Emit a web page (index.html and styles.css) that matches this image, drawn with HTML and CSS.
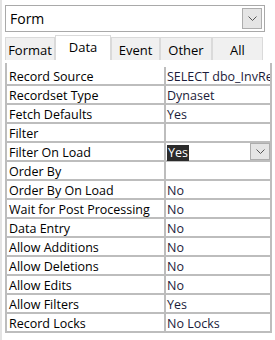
FILE: index.html
```html
<!DOCTYPE html>
<html>
<head>
    <title>Property Sheet</title>
    <link rel="stylesheet" href="styles.css">
</head>
<body>
    <div class="sheet">
        <div class="combo">
            <span class="combo-text">Form</span>
            <span class="drop-btn">
                <svg width="9" height="5" viewBox="0 0 9 5"><path d="M0.5 0.5 L4.5 4.5 L8.5 0.5" fill="none" stroke="#555" stroke-width="1"/></svg>
            </span>
        </div>

        <div class="tabs">
            <div class="tab tab-format">Format</div>
            <div class="tab tab-data active">Data</div>
            <div class="tab tab-event">Event</div>
            <div class="tab tab-other">Other</div>
            <div class="tab tab-all">All</div>
        </div>

        <div class="grid">
            <div class="row"><div class="label">Record Source</div><div class="value">SELECT dbo_InvReceipts.*</div></div>
            <div class="row"><div class="label">Recordset Type</div><div class="value">Dynaset</div></div>
            <div class="row"><div class="label">Fetch Defaults</div><div class="value">Yes</div></div>
            <div class="row"><div class="label">Filter</div><div class="value"></div></div>
            <div class="row"><div class="label">Filter On Load</div><div class="value selected"><span class="sel">Yes</span>
                <span class="drop-btn small">
                    <svg width="9" height="5" viewBox="0 0 9 5"><path d="M0.5 0.5 L4.5 4.5 L8.5 0.5" fill="none" stroke="#555" stroke-width="1"/></svg>
                </span></div></div>
            <div class="row"><div class="label">Order By</div><div class="value"></div></div>
            <div class="row"><div class="label">Order By On Load</div><div class="value">No</div></div>
            <div class="row"><div class="label">Wait for Post Processing</div><div class="value">No</div></div>
            <div class="row"><div class="label">Data Entry</div><div class="value">No</div></div>
            <div class="row"><div class="label">Allow Additions</div><div class="value">No</div></div>
            <div class="row"><div class="label">Allow Deletions</div><div class="value">No</div></div>
            <div class="row"><div class="label">Allow Edits</div><div class="value">No</div></div>
            <div class="row"><div class="label">Allow Filters</div><div class="value">Yes</div></div>
            <div class="row"><div class="label">Record Locks</div><div class="value">No Locks</div></div>
        </div>
    </div>
</body>
</html>
```

FILE: styles.css
```css
body {
    margin: 0;
    background: #fff;
    font-family: "Open Sans", "Noto Sans", sans-serif;
    color: #000;
}
.sheet {
    width: 275px;
    height: 340px;
    border-left: 2px solid #e3e3e3;
    box-sizing: border-box;
    padding-top: 5px;
}
.combo {
    display: flex;
    align-items: center;
    justify-content: space-between;
    width: 260px;
    height: 27px;
    margin-left: 3px;
    border: 1px solid #a9a9a9;
    box-sizing: border-box;
    font-size: 14px;
}
.combo-text {
    padding-left: 4px;
}
.drop-btn {
    display: flex;
    align-items: center;
    justify-content: center;
    width: 20px;
    height: 21px;
    margin-right: 2px;
    background: #e5e5e5;
    border: 1px solid #adadad;
    box-sizing: border-box;
}
.tabs {
    display: flex;
    align-items: flex-end;
    height: 25px;
    margin-top: 3px;
    margin-left: 3px;
}
.tab {
    height: 23px;
    box-sizing: border-box;
    background: #f0f0f0;
    border: 1px solid #dadada;
    border-bottom: none;
    font-size: 13px;
    line-height: 24px;
    text-align: center;
}
.tab.active {
    height: 25px;
    background: #fff;
    line-height: 23px;
}
.tab-format { width: 50px; }
.tab-data { width: 56px; }
.tab-event { width: 49px; }
.tab-other { width: 52px; }
.tab-all { width: 51px; }
.grid {
    margin-top: 3px;
    margin-left: 3px;
    width: 267px;
    padding-top: 4px;
    border-left: 2px solid #bdbdbd;
    border-right: 2px solid #bdbdbd;
    box-sizing: border-box;
    overflow: hidden;
}
.row {
    display: flex;
    height: 19px;
    border-bottom: 2px solid #bdbdbd;
    box-sizing: border-box;
    font-size: 12.5px;
    line-height: 17px;
}
.label {
    width: 155px;
    flex-shrink: 0;
    padding-left: 2px;
    padding-top: 1px;
    border-right: 2px solid #bdbdbd;
    white-space: nowrap;
}
.value {
    flex: 1;
    min-width: 0;
    padding-left: 1px;
    padding-top: 1px;
    white-space: nowrap;
    color: #1b1b3a;
}
.value.selected {
    display: flex;
    align-items: center;
    justify-content: space-between;
    padding-top: 0;
}
.sel {
    background: #2b2b2b;
    color: #fff;
    padding: 0 1px;
    line-height: 16px;
    margin-top: 2px;
}
.drop-btn.small {
    width: 20px;
    height: 17px;
    margin-right: 0;
}
```
